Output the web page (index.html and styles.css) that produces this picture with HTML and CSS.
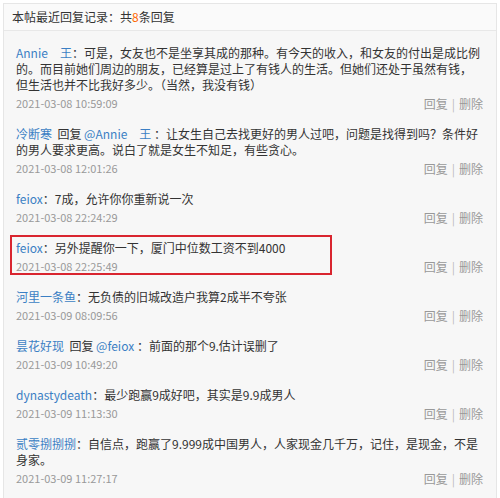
FILE: index.html
```html
<!DOCTYPE html>
<html lang="zh-CN">
<head>
    <meta charset="UTF-8">
    <meta name="viewport" content="width=device-width, initial-scale=1.0">
    <title>最近回复记录</title>
    <link rel="stylesheet" href="styles.css">
</head>
<body>

    <div class="reply-box">
        <div class="reply-head">本帖最近回复记录：共<span class="count">8</span>条回复</div>

        <ul class="reply-list">
            <li class="reply-item">
                <p class="reply-text"><a class="user">Annie　王</a>：可是，女友也不是坐享其成的那种。有今天的收入，和女友的付出是成比例的。而目前她们周边的朋友，已经算是过上了有钱人的生活。但她们还处于虽然有钱，但生活也并不比我好多少。（当然，我没有钱）</p>
                <div class="reply-meta">
                    <span class="date">2021-03-08 10:59:09</span>
                    <span class="actions">回复<i>|</i>删除</span>
                </div>
            </li>
            <li class="reply-item">
                <p class="reply-text"><a class="user">冷断寒</a>&nbsp; 回复 <a class="user">@Annie　王</a> ：让女生自己去找更好的男人过吧，问题是找得到吗？条件好的男人要求更高。说白了就是女生不知足，有些贪心。</p>
                <div class="reply-meta">
                    <span class="date">2021-03-08 12:01:26</span>
                    <span class="actions">回复<i>|</i>删除</span>
                </div>
            </li>
            <li class="reply-item">
                <p class="reply-text"><a class="user">feiox</a>：7成，允许你你重新说一次</p>
                <div class="reply-meta">
                    <span class="date">2021-03-08 22:24:29</span>
                    <span class="actions">回复<i>|</i>删除</span>
                </div>
            </li>
            <li class="reply-item marked">
                <p class="reply-text"><a class="user">feiox</a>：另外提醒你一下，厦门中位数工资不到4000</p>
                <div class="reply-meta">
                    <span class="date">2021-03-08 22:25:49</span>
                    <span class="actions">回复<i>|</i>删除</span>
                </div>
                <div class="mark-box"></div>
            </li>
            <li class="reply-item">
                <p class="reply-text"><a class="user">河里一条鱼</a>：无负债的旧城改造户我算2成半不夸张</p>
                <div class="reply-meta">
                    <span class="date">2021-03-09 08:09:56</span>
                    <span class="actions">回复<i>|</i>删除</span>
                </div>
            </li>
            <li class="reply-item">
                <p class="reply-text"><a class="user">昙花好现</a>&nbsp; 回复 <a class="user">@feiox</a> ：前面的那个9.估计误删了</p>
                <div class="reply-meta">
                    <span class="date">2021-03-09 10:49:20</span>
                    <span class="actions">回复<i>|</i>删除</span>
                </div>
            </li>
            <li class="reply-item">
                <p class="reply-text"><a class="user">dynastydeath</a>：最少跑赢9成好吧，其实是9.9成男人</p>
                <div class="reply-meta">
                    <span class="date">2021-03-09 11:13:30</span>
                    <span class="actions">回复<i>|</i>删除</span>
                </div>
            </li>
            <li class="reply-item">
                <p class="reply-text"><a class="user">贰零捌捌捌</a>：自信点，跑赢了9.999成中国男人，人家现金几千万，记住，是现金，不是身家。</p>
                <div class="reply-meta">
                    <span class="date">2021-03-09 11:27:17</span>
                    <span class="actions">回复<i>|</i>删除</span>
                </div>
            </li>
        </ul>
    </div>

</body>
</html>
```

FILE: styles.css
```css
body {
    margin: 0;
    padding: 3px 3px 0 3px;
    background-color: #fff;
    font-family: "Noto Sans CJK SC", "Noto Sans", sans-serif;
    font-size: 12px;
    color: #333;
}

.reply-box {
    border: 1px solid #e6e6e6;
    border-bottom: none;
    background-color: #f7f7f7;
    height: 495px;
}

.reply-head {
    height: 26px;
    line-height: 26px;
    padding-left: 8px;
    background-color: #fafafa;
    border-bottom: 1px solid #e8e8e8;
    color: #333;
}

.reply-head .count {
    color: #f60;
}

.reply-list {
    list-style: none;
    margin: 0;
    padding: 14px 13px 0 12px;
}

.reply-item {
    position: relative;
    padding-bottom: 13px;
}

.reply-text {
    margin: 0;
    line-height: 16px;
}

.user {
    color: #3b7fc4;
    text-decoration: none;
}

.reply-meta {
    display: flex;
    justify-content: space-between;
    align-items: center;
    height: 20px;
    color: #999;
}

.date {
    font-size: 11px;
}

.actions i {
    font-style: normal;
    margin: 0 4px;
    color: #bbb;
}

/* red annotation frame drawn over the marked reply */
.mark-box {
    position: absolute;
    left: -6px;
    top: -5px;
    width: 318px;
    height: 36px;
    border: 2px solid #d9252f;
}
```
